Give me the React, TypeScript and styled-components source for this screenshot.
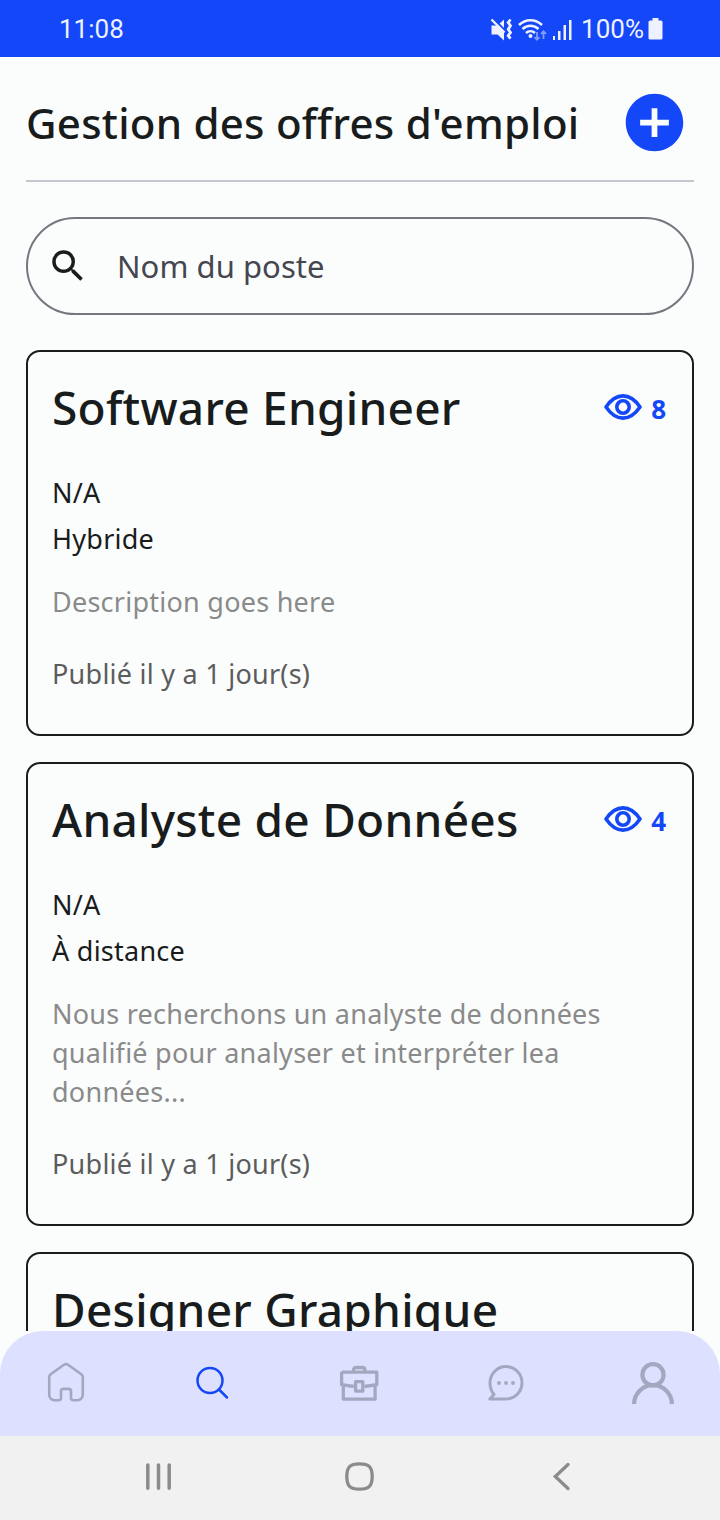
import React from "react";
import styled, { createGlobalStyle } from "styled-components";

const blue = "#1447f7";
const ink = "#191c1c";
const muted = "#a5a6bf";
const surface = "#fbfdfd";

const GlobalStyle = createGlobalStyle`
  * { box-sizing: border-box; }
  body { margin: 0; background: ${surface}; }
  svg { display: block; flex: none; }
`;

const Screen = styled.div`
  width: 720px;
  height: 1520px;
  display: flex;
  flex-direction: column;
  overflow: hidden;
  background: ${surface};
  color: ${ink};
  font-family: "Noto Sans", sans-serif;
  letter-spacing: 0.25px;
`;

const StatusBar = styled.header`
  flex: none;
  height: 57px;
  padding: 2px 57px 0 59px;
  display: flex;
  align-items: center;
  justify-content: space-between;
  background: ${blue};
  color: #eef1ff;
  font: 400 26px/55px Roboto, sans-serif;
  letter-spacing: 0;
`;

const StatusIcons = styled.div`
  display: flex;
  align-items: center;
`;

const BatteryLevel = styled.span`
  margin: 0 4px 0 8px;
`;

const Content = styled.main`
  flex: 1;
  min-height: 0;
  overflow: hidden;
  padding: 0 26px;
`;

const PageHeader = styled.div`
  height: 125px;
  padding: 8px 5px 0 0;
  display: flex;
  align-items: center;
  justify-content: space-between;
  border-bottom: 2px solid #c6c5d0;
`;

const PageTitle = styled.h1`
  margin: 0;
  font-size: 42px;
  line-height: 58px;
  font-weight: 500;
  white-space: nowrap;
`;

const IconButton = styled.button`
  padding: 0;
  border: 0;
  background: none;
  color: ${blue};
`;

const SearchField = styled.label`
  height: 98px;
  margin: 35px 0;
  padding: 0 19px;
  display: flex;
  align-items: center;
  gap: 28px;
  border: 2px solid #767680;
  border-radius: 49px;
`;

const Placeholder = styled.span`
  color: #45464f;
  font-size: 31px;
  line-height: 42px;
  letter-spacing: 0.05px;
`;

const OfferList = styled.div`
  display: flex;
  flex-direction: column;
  gap: 26px;
`;

const OfferCard = styled.article`
  padding: 23px 24px 41px;
  border: 2px solid ${ink};
  border-radius: 14px;
`;

const OfferHead = styled.div`
  display: flex;
  align-items: center;
  justify-content: space-between;
  height: 64px;
  margin-bottom: 34px;
`;

const OfferTitle = styled.h2`
  margin: 0;
  font-size: 46px;
  line-height: 64px;
  font-weight: 500;
  white-space: nowrap;
`;

const Views = styled.div`
  display: flex;
  align-items: center;
  gap: 9px;
  padding: 4px 2px 0 0;
  color: ${blue};
  font-size: 26px;
  line-height: 40px;
  font-weight: 700;
  letter-spacing: 0;
`;

const Line = styled.p<{ $color?: string; $top?: number }>`
  margin: ${(p) => p.$top ?? 0}px 0 0;
  color: ${(p) => p.$color ?? ink};
  font-size: 27px;
  line-height: 39px;
`;

const TabBar = styled.nav`
  flex: none;
  height: 105px;
  padding: 0 45px 1px 44px;
  display: flex;
  align-items: center;
  justify-content: space-between;
  background: #dee0ff;
  border-radius: 43px 43px 0 0;
  color: ${muted};
`;

const SystemBar = styled.footer`
  flex: none;
  height: 84px;
  padding: 0 138px 4px;
  display: flex;
  align-items: center;
  justify-content: space-between;
  background: #f1f1f1;
  color: #8b8b8b;
`;

const MutedIcon = () => (
  <svg width="28" height="24" viewBox="0 0 28 24" fill="currentColor">
    <path d="M1.500 7.500h6l6.500-6v21l-6.500-6h-6z" />
    <path d="M2.500 0L17 14.500" stroke={blue} strokeWidth="2.200" />
    <path d="M1.500 1.500L14.500 14.500" stroke="currentColor" strokeWidth="2.400" />
    <path d="M20.500 1.500l-2.300 3 2.300 3.300-2.300 3.400 2.300 3.300-2.300 3.200 2.300 3" fill="none" stroke="currentColor" strokeWidth="2.800" />
  </svg>
);

const WifiIcon = () => (
  <svg width="29" height="24" viewBox="0 0 29 24" fill="none" stroke="currentColor" strokeWidth="2.500">
    <path d="M1 7C7.500.5 17.500.5 24 7M4.500 11c4.500-4.400 11.500-4.400 16 0M8 15c2.600-2.500 6.400-2.500 9 0" />
    <circle cx="12.500" cy="18" r="2" fill="currentColor" stroke="none" />
    <path d="M19 14v8m-2.500-2.800l2.500 2.500 2.500-2.500M25.500 21v-8m-2.500 2.800l2.500-2.500 2.500 2.500" opacity=".5" strokeWidth="1.800" />
  </svg>
);

const SignalIcon = () => (
  <svg width="26" height="24" viewBox="0 0 26 24" fill="currentColor">
    <path d="M6 18h2v4H6zM11 13h2.500v9H11zM16.500 7h2.500v15h-2.500zM22 2h2.500v20H22z" />
  </svg>
);

const BatteryIcon = () => (
  <svg width="15" height="24" viewBox="0 0 15 24" fill="currentColor">
    <path d="M4.500 0h6v2.500h2.500a1.500 1.500 0 0 1 1.500 1.500v16a1.500 1.500 0 0 1-1.500 1.500H2A1.500 1.500 0 0 1 .5 20V4A1.500 1.500 0 0 1 2 2.500h2.500z" />
  </svg>
);

const AddIcon = () => (
  <svg width="69" height="69" viewBox="0 0 24 24" fill="currentColor">
    <path d="M12 2C6.480 2 2 6.480 2 12s4.480 10 10 10 10-4.480 10-10S17.520 2 12 2zm5 11h-4v4h-2v-4H7v-2h4V7h2v4h4v2z" />
  </svg>
);

const MagnifierIcon = () => (
  <svg width="42" height="42" viewBox="0 0 24 24" fill={ink}>
    <path d="M15.500 14h-.79l-.28-.27A6.471 6.471 0 0 0 16 9.500 6.500 6.500 0 1 0 9.500 16c1.610 0 3.090-.59 4.230-1.570l.27.28v.79l5 4.990L20.490 19l-4.990-5zm-6 0C7.010 14 5 11.990 5 9.500S7.010 5 9.500 5 14 7.010 14 9.500 11.990 14 9.500 14z" />
  </svg>
);

const EyeIcon = () => (
  <svg width="38" height="30" viewBox="0 0 38 30" fill="none" stroke="currentColor" strokeWidth="3.600" strokeLinejoin="round">
    <path d="M2 13C7 5.700 12.500 1.900 19 1.900S31 5.700 36 13c-5 7.300-10.500 11.100-17 11.100S7 20.300 2 13z" />
    <circle cx="19" cy="13" r="6.200" />
  </svg>
);

const HomeIcon = () => (
  <svg width="44" height="44" viewBox="0 0 44 44" fill="none" stroke="currentColor" strokeWidth="2.600" strokeLinejoin="round">
    <path d="M20 3.800L6.700 13.200C5.700 14 5.200 15 5.200 16.200V33.500c0 3.500 2.200 5.700 5.500 5.700h3.800c1.600 0 2.500-.9 2.500-2.500v-6.500c0-1.500.8-2.300 2.300-2.300h5.400c1.500 0 2.300.8 2.300 2.300v6.500c0 1.600.9 2.500 2.500 2.500h3.800c3.300 0 5.500-2.200 5.500-5.700V16.200c0-1.200-.5-2.200-1.500-3L24 3.800c-1.400-1-2.600-1-4 0z" />
  </svg>
);

const TabSearchIcon = () => (
  <svg width="44" height="44" viewBox="0 0 44 44" fill="none" stroke={blue} strokeWidth="2.500" strokeLinecap="round">
    <circle cx="19" cy="19.500" r="12.500" />
    <path d="M28 28.500l8 8" />
  </svg>
);

const BriefcaseIcon = () => (
  <svg width="44" height="44" viewBox="0 0 44 44" fill="none" stroke="currentColor" strokeWidth="3.300" strokeLinejoin="round">
    <path d="M3.600 11.100h35.200v12.600L26.500 25.500M15.800 25.500L3.600 23.700V11.100M5.300 24v14.100h31.800V24" />
    <path d="M15.600 10.800V8.800c0-1.500.8-2.300 2.300-2.300h6.600c1.500 0 2.300.8 2.300 2.300v2" />
    <path d="M17.600 20.600h7.200v9.500h-7.200z" />
  </svg>
);

const ChatIcon = () => (
  <svg width="44" height="44" viewBox="0 0 44 44" fill="none" stroke="currentColor" strokeWidth="3" strokeLinejoin="round" strokeLinecap="round">
    <path d="M22 38H5.800L10 33.500C7.500 30.500 6 26.500 6 22A16 16.200 0 1 1 22 38z" />
    <path d="M15 22h.01M22 22h.01M29 22h.01" strokeWidth="3.800" />
  </svg>
);

const PersonIcon = () => (
  <svg width="44" height="44" viewBox="0 0 44 44" fill="none" stroke="currentColor" strokeWidth="4.200">
    <circle cx="22" cy="13.700" r="10.600" />
    <path d="M3.100 43a18.900 18.900 0 0 1 37.800 0" />
  </svg>
);

const RecentsIcon = () => (
  <svg width="42" height="42" viewBox="0 0 42 42" stroke="currentColor" strokeWidth="3.500" strokeLinecap="round">
    <path d="M9.800 10v23.200M20.500 10v23.200M31.200 10v23.200" />
  </svg>
);

const SystemHomeIcon = () => (
  <svg width="42" height="42" viewBox="0 0 42 42" fill="none" stroke="currentColor" strokeWidth="3.300">
    <path d="M20.500 8.800c9.500 0 12.700 3.200 12.700 12.700S30 34.200 20.500 34.200 7.800 31 7.800 21.500 11 8.800 20.500 8.800z" />
  </svg>
);

const BackIcon = () => (
  <svg width="42" height="42" viewBox="0 0 42 42" fill="none" stroke="currentColor" strokeWidth="3.300" strokeLinecap="round">
    <path d="M28 9.500L15.300 21.500l12.700 12" />
  </svg>
);

interface Offer {
  title: string;
  views?: number;
  company: string;
  mode: string;
  description: string[];
  published: string;
}

const offers: Offer[] = [
  {
    title: "Software Engineer",
    views: 8,
    company: "N/A",
    mode: "Hybride",
    description: ["Description goes here"],
    published: "Publié il y a 1 jour(s)",
  },
  {
    title: "Analyste de Données",
    views: 4,
    company: "N/A",
    mode: "À distance",
    description: [
      "Nous recherchons un analyste de données",
      "qualifié pour analyser et interpréter lea",
      "données...",
    ],
    published: "Publié il y a 1 jour(s)",
  },
];

export default function App() {
  return (
    <Screen>
      <GlobalStyle />
      <StatusBar>
        <span>11:08</span>
        <StatusIcons>
          <MutedIcon />
          <WifiIcon />
          <SignalIcon />
          <BatteryLevel>100%</BatteryLevel>
          <BatteryIcon />
        </StatusIcons>
      </StatusBar>
      <Content>
        <PageHeader>
          <PageTitle>Gestion des offres d'emploi</PageTitle>
          <IconButton aria-label="Ajouter une offre">
            <AddIcon />
          </IconButton>
        </PageHeader>
        <SearchField>
          <MagnifierIcon />
          <Placeholder>Nom du poste</Placeholder>
        </SearchField>
        <OfferList>
          {offers.map((offer) => (
            <OfferCard key={offer.title}>
              <OfferHead>
                <OfferTitle>{offer.title}</OfferTitle>
                <Views>
                  <EyeIcon />
                  {offer.views}
                </Views>
              </OfferHead>
              <Line>{offer.company}</Line>
              <Line $top={7}>{offer.mode}</Line>
              <Line as="div" $top={24} $color="#8a8a8a">
                {offer.description.map((text) => (
                  <div key={text}>{text}</div>
                ))}
              </Line>
              <Line $top={33} $color="#5c5c5c">{offer.published}</Line>
            </OfferCard>
          ))}
          <OfferCard>
            <OfferHead>
              <OfferTitle>Designer Graphique</OfferTitle>
            </OfferHead>
          </OfferCard>
        </OfferList>
      </Content>
      <TabBar>
        <HomeIcon />
        <TabSearchIcon />
        <BriefcaseIcon />
        <ChatIcon />
        <PersonIcon />
      </TabBar>
      <SystemBar>
        <RecentsIcon />
        <SystemHomeIcon />
        <BackIcon />
      </SystemBar>
    </Screen>
  );
}
